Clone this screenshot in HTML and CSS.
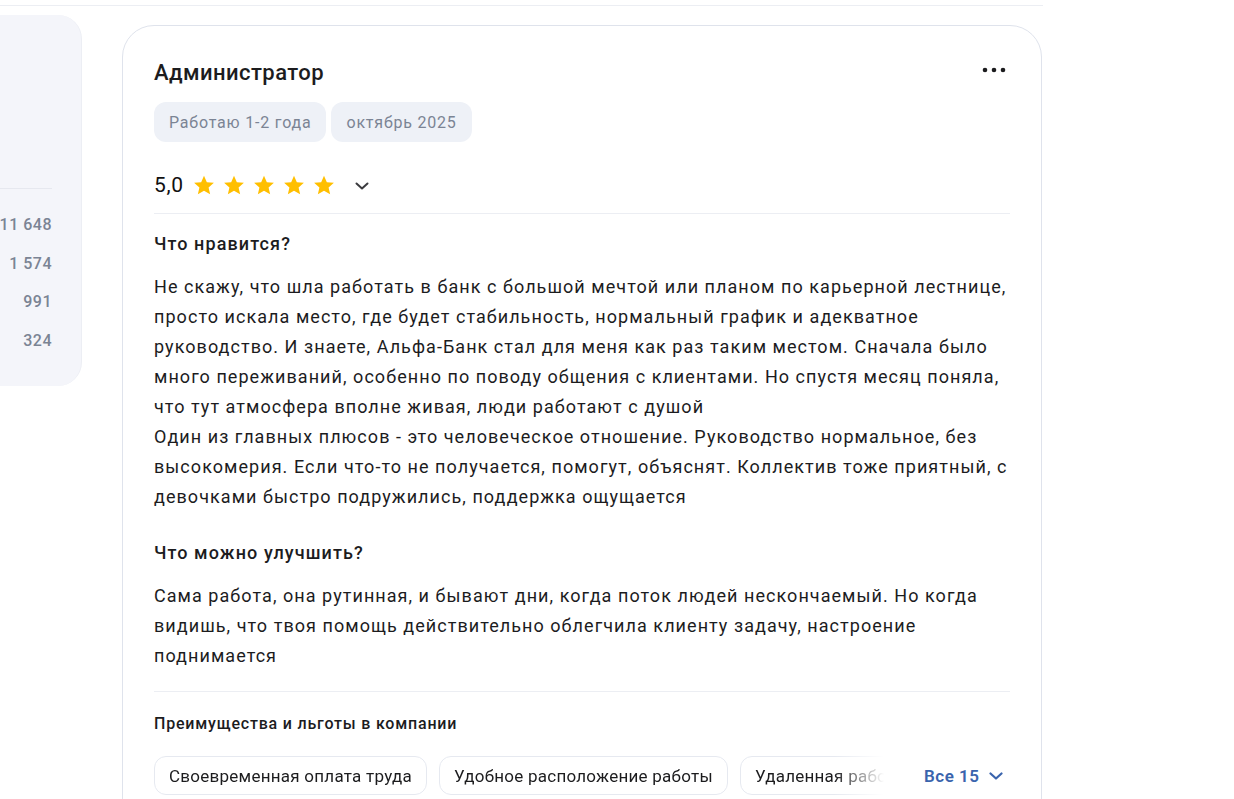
FILE: index.html
```html
<!DOCTYPE html>
<html lang="ru">
<head>
<meta charset="utf-8">
<link rel="stylesheet" href="styles.css">
</head>
<body>
<div class="page">
  <aside class="sidebar">
    <div class="side-top"></div>
    <div class="side-divider"></div>
    <ul class="side-list">
      <li>11 648</li>
      <li>1 574</li>
      <li>991</li>
      <li>324</li>
    </ul>
  </aside>

  <article class="card">
    <header class="card-head">
      <h2 class="title">Администратор</h2>
      <button class="more" aria-label="Ещё">
        <svg width="24" height="6" viewBox="0 0 24 6"><circle cx="3" cy="3" r="2.3" fill="#1c1c1e"/><circle cx="12" cy="3" r="2.3" fill="#1c1c1e"/><circle cx="21" cy="3" r="2.3" fill="#1c1c1e"/></svg>
      </button>
    </header>
    <div class="tags">
      <span class="tag">Работаю 1-2 года</span>
      <span class="tag">октябрь 2025</span>
    </div>
    <div class="rating">
      <span class="score">5,0</span>
      <span class="stars">
        <svg class="star" viewBox="0 0 24 24"><path d="M12 1.8l3.1 7.1 7.7.7-5.8 5.1 1.7 7.5L12 18.3l-6.7 3.9 1.7-7.5-5.8-5.1 7.7-.7z"/></svg>
        <svg class="star" viewBox="0 0 24 24"><path d="M12 1.8l3.1 7.1 7.7.7-5.8 5.1 1.7 7.5L12 18.3l-6.7 3.9 1.7-7.5-5.8-5.1 7.7-.7z"/></svg>
        <svg class="star" viewBox="0 0 24 24"><path d="M12 1.8l3.1 7.1 7.7.7-5.8 5.1 1.7 7.5L12 18.3l-6.7 3.9 1.7-7.5-5.8-5.1 7.7-.7z"/></svg>
        <svg class="star" viewBox="0 0 24 24"><path d="M12 1.8l3.1 7.1 7.7.7-5.8 5.1 1.7 7.5L12 18.3l-6.7 3.9 1.7-7.5-5.8-5.1 7.7-.7z"/></svg>
        <svg class="star" viewBox="0 0 24 24"><path d="M12 1.8l3.1 7.1 7.7.7-5.8 5.1 1.7 7.5L12 18.3l-6.7 3.9 1.7-7.5-5.8-5.1 7.7-.7z"/></svg>
      </span>
      <svg class="chev" width="14" height="8" viewBox="0 0 14 8"><path d="M1.5 1.5L7 6.5l5.5-5" fill="none" stroke="#3b3b3f" stroke-width="2" stroke-linecap="round" stroke-linejoin="round"/></svg>
    </div>
    <div class="divider"></div>

    <section class="block">
      <h3 class="block-title">Что нравится?</h3>
      <p class="text">Не скажу, что шла работать в банк с большой мечтой или планом по карьерной лестнице, просто искала место, где будет стабильность, нормальный график и адекватное руководство. И знаете, Альфа-Банк стал для меня как раз таким местом. Сначала было много переживаний, особенно по поводу общения с клиентами. Но спустя месяц поняла, что тут атмосфера вполне живая, люди работают с душой<br>Один из главных плюсов - это человеческое отношение. Руководство нормальное, без высокомерия. Если что-то не получается, помогут, объяснят. Коллектив тоже приятный, с девочками быстро подружились, поддержка ощущается</p>
    </section>

    <section class="block block-second">
      <h3 class="block-title">Что можно улучшить?</h3>
      <p class="text">Сама работа, она рутинная, и бывают дни, когда поток людей нескончаемый. Но когда видишь, что твоя помощь действительно облегчила клиенту задачу, настроение поднимается</p>
    </section>

    <div class="divider divider-benefits"></div>

    <section class="benefits">
      <h4 class="benefits-title">Преимущества и льготы в компании</h4>
      <div class="benefits-row">
        <div class="chips">
          <span class="chip">Своевременная оплата труда</span>
          <span class="chip">Удобное расположение работы</span>
          <span class="chip">Удаленная работа</span>
          <span class="chip">ДМС</span>
        </div>
        <button class="all">Все 15
          <svg width="14" height="8" viewBox="0 0 14 8"><path d="M1.5 1.5L7 6.5l5.5-5" fill="none" stroke="#3a64ad" stroke-width="2.2" stroke-linecap="round" stroke-linejoin="round"/></svg>
        </button>
      </div>
    </section>
  </article>
</div>
</body>
</html>
```

FILE: styles.css
```css
* { box-sizing: border-box; }

html, body {
  margin: 0;
  padding: 0;
  background: #ffffff;
  font-family: Roboto, "Noto Sans", Arial, sans-serif;
  color: #1c1c1e;
  overflow: hidden;
}

.page {
  width: 1043px;
  margin-top: 5px;
  border-top: 1px solid #eceef3;
  display: flex;
  align-items: flex-start;
}

/* sidebar */
.sidebar {
  flex: none;
  width: 260px;
  margin-left: -178px;
  margin-top: 9px;
  height: 371px;
  background: #f4f5fa;
  border-right: 1px solid #eceef4;
  border-radius: 0 24px 24px 0;
  padding-right: 29px;
}

.side-top { height: 173px; }

.side-divider {
  height: 1px;
  background: #e6e8ef;
}

.side-list {
  list-style: none;
  margin: 0;
  padding: 24px 0 0;
  display: flex;
  flex-direction: column;
  gap: 14.7px;
}

.side-list li {
  text-align: right;
  font-size: 16px;
  line-height: 24px;
  font-weight: 500;
  letter-spacing: 0.5px;
  color: #7b8494;
}

/* card */
.card {
  flex: none;
  width: 920px;
  margin-left: 40px;
  margin-top: 19px;
  border: 1px solid #dfe3ec;
  border-radius: 32px;
  padding: 33px 31px 40px;
  min-height: 900px;
}

.card-head {
  display: flex;
  justify-content: space-between;
  align-items: center;
}

.title {
  margin: 0;
  font-size: 22px;
  line-height: 28px;
  font-weight: 500;
  letter-spacing: 0.45px;
  color: #1c1c1e;
}

.more {
  border: 0;
  background: none;
  padding: 0;
  margin-right: 4px;
  margin-top: -7px;
  display: flex;
}

.tags {
  display: flex;
  gap: 5px;
  margin-top: 15px;
}

.tag {
  height: 40px;
  line-height: 41px;
  padding: 0 15px;
  background: #eef1f7;
  border-radius: 12px;
  font-size: 16px;
  letter-spacing: 0.8px;
  color: #7b8494;
}

.rating {
  display: flex;
  align-items: center;
  height: 28px;
  margin-top: 29px;
}

.score {
  font-size: 21px;
  line-height: 28px;
  font-weight: 400;
  letter-spacing: 0.6px;
  color: #111;
  margin-right: 9px;
}

.stars {
  display: flex;
  gap: 8px;
}

.star {
  width: 22px;
  height: 22px;
  fill: #ffbf00;
}

.chev {
  margin-left: 20px;
  margin-top: 1px;
}

.divider {
  height: 1px;
  background: #eceef3;
  margin-top: 14px;
}

.block { margin-top: 18px; }
.block-second { margin-top: 29px; }

.block-title {
  margin: 0;
  font-size: 18px;
  line-height: 24px;
  font-weight: 500;
  letter-spacing: 1.1px;
  color: #1c1c1e;
}

.text {
  margin: 16px 0 0;
  font-size: 18px;
  line-height: 30px;
  letter-spacing: 1.05px;
  color: #1c1c1e;
}

.divider-benefits { margin-top: 20px; }

.benefits { margin-top: 22px; }

.benefits-title {
  margin: 0;
  font-size: 16px;
  line-height: 20px;
  font-weight: 500;
  letter-spacing: 0.8px;
  color: #1c1c1e;
}

.benefits-row {
  display: flex;
  align-items: center;
  margin-top: 22px;
}

.chips {
  width: 740px;
  flex: none;
  display: flex;
  gap: 12px;
  overflow: hidden;
  -webkit-mask-image: linear-gradient(to right, #000 680px, transparent 730px);
  mask-image: linear-gradient(to right, #000 680px, transparent 730px);
}

.chip {
  flex: none;
  height: 39px;
  line-height: 38px;
  padding: 0 14px;
  border: 1px solid #e6e9f0;
  border-radius: 12px;
  font-size: 17px;
  letter-spacing: 0.25px;
  color: #1c1c1e;
  white-space: nowrap;
}

.all {
  margin-left: 30px;
  border: 0;
  background: none;
  padding: 0;
  display: flex;
  align-items: center;
  gap: 10px;
  font-family: inherit;
  font-size: 17px;
  font-weight: 600;
  letter-spacing: 0.5px;
  color: #3a64ad;
}
```
